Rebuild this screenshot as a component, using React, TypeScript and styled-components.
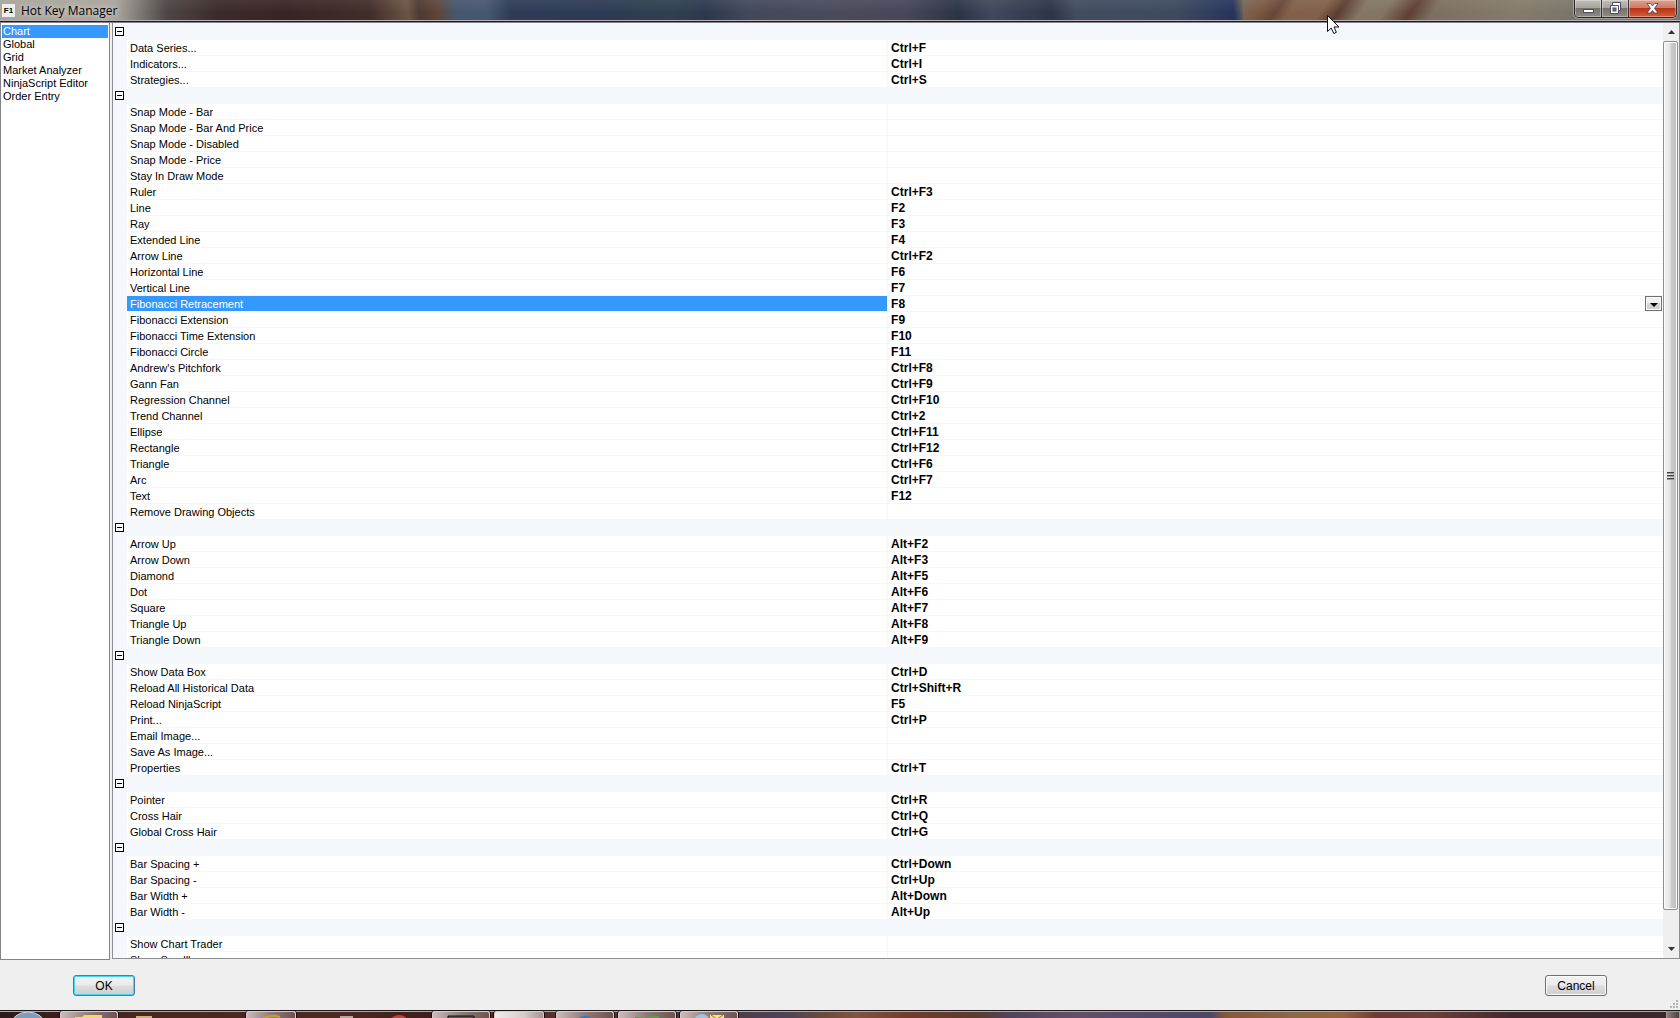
import React, { useState } from "react";
import styled, { createGlobalStyle, css } from "styled-components";

const GlobalStyle = createGlobalStyle`
  *, *::before, *::after { box-sizing: border-box; }
  html, body { margin: 0; height: 100%; overflow: hidden; }
  #root { height: 100%; }
  body, button { font-family: "Liberation Sans", Arial, sans-serif; font-size: 11px; color: #000; }
`;

const Screen = styled.div`
  display: flex;
  flex-direction: column;
  height: 100vh;
  overflow: hidden;
  background: #efefef;
`;

const TitleBar = styled.header`
  display: flex;
  align-items: flex-start;
  flex: none;
  height: 23px;
  padding: 0 3px 0 2px;
  border-bottom: 1px solid #85848c;
  background:
    linear-gradient(#0000 20px, #b4b0b4 20px, #b4b0b4 21px, #201a28 21px),
    linear-gradient(#fff1, #0000 60%),
    linear-gradient(125deg, #77695a 0, #7c5a44 5%, #664636 9%, #80604a 12%, #835f48 19%, #5b3d32 23%, #857664 28%,
      #837462 33%, #5f3e33 39%, #7c6f60 44%, #847b6b 62%, #77736a 78%, #77746e 100%) right / 26% 100% no-repeat,
    linear-gradient(83deg, #aaa59b 0, #a8a39b 7%, #77716c 8.6%, #4c4644 10%, #3b2b2a 13%, #392424 17%,
      #402d29 22%, #6c5444 24.3%, #4d392f 25%, #5f4436 26%, #46566e 27.2%, #47576f 29%, #2f3b56 30.4%,
      #2c3a53 36%, #30404f 40%, #2c384e 42%, #41485a 44.5%, #494b5b 50%, #454657 54%, #2b3446 57%,
      #3f495b 59%, #2b3547 62.6%, #414c5f 64%, #3d495f 70%, #26335a 73.4%, #77695a 74.1%);
`;

const AppIcon = styled.span`
  flex: none;
  width: 13px;
  height: 13px;
  margin-top: 4px;
  background: #eeeeec;
  font: bold 8px/13px "Liberation Sans", sans-serif;
  text-align: center;
`;

const Title = styled.h1`
  flex: 1;
  margin: 0;
  padding-left: 6px;
  font: 12px/22px "Open Sans", "Noto Sans", sans-serif;
  text-shadow: 0 0 6px #fffa, 0 0 10px #fff8;
`;

const CaptionGroup = styled.div`
  display: flex;
  height: 18px;
  border: 1px solid #2a2625;
  border-top: 0;
  border-radius: 0 0 5px 5px;
  box-shadow: 0 0 0 1px #cfcac480;
  overflow: hidden;
`;

const CaptionButton = styled.button<{ $close?: boolean }>`
  display: flex;
  align-items: center;
  justify-content: center;
  width: ${(p) => (p.$close ? 47 : 27)}px;
  height: 17px;
  padding: 0;
  border: 0;
  border-right: ${(p) => (p.$close ? "0" : "1px solid #393431")};
  box-shadow: inset 0 0 0 1px #fff5;
  background: ${(p) =>
    p.$close
      ? "linear-gradient(#e0a292, #cf7a66 45%, #b83317 50%, #d85c38)"
      : "linear-gradient(#c3bfba, #a8a39d 45%, #77726c 50%, #8f8a84)"};
`;

const Body = styled.main`
  display: flex;
  flex: 1;
  min-height: 0;
  gap: 2px;
`;

const Categories = styled.nav`
  flex: none;
  width: 110px;
  padding: 2px 1px;
  border: 1px solid #82848a;
  border-top: 0;
  background: #fff;
`;

const CategoryButton = styled.button<{ $active: boolean }>`
  display: block;
  width: 100%;
  height: 13px;
  padding: 0 0 0 1px;
  border: 0;
  line-height: 13px;
  text-align: left;
  white-space: nowrap;
  background: ${(p) => (p.$active ? "#3399ff" : "#fff")};
  color: ${(p) => (p.$active ? "#fff" : "#000")};
`;

const Panel = styled.section`
  display: flex;
  flex: 1;
  min-width: 0;
  margin-bottom: 1px;
  border: 1px solid #8d8e91;
  border-top: 0;
  background: #fff;
  overflow: hidden;
`;

const TableView = styled.div`
  flex: 1;
  min-width: 0;
  padding-top: 1px;
  background: #f4f7fb;
  overflow: hidden;
`;

const Table = styled.table`
  width: 100%;
  table-layout: fixed;
  border-collapse: separate;
  border-spacing: 0;
`;

const GutterCol = styled.col`
  width: 14px;
`;
const NameCol = styled.col`
  width: 49.1%;
`;

const cell = css`
  height: 16px;
  text-align: left;
  white-space: nowrap;
  border-bottom: 1px solid #f4f6f8;
`;

const Gutter = styled.td`
  padding: 0;
  background: #f4f7fb;
`;

const NameCell = styled.th<{ $selected: boolean }>`
  ${cell}
  padding: 2px 0 0 3px;
  line-height: 13px;
  font-weight: 400;
  border-right: 1px solid #f4f6f8;
  background: ${(p) => (p.$selected ? "#3399ff" : "#fff")};
  color: ${(p) => (p.$selected ? "#fff" : "#000")};
  background-clip: padding-box;
`;

const ValueCell = styled.td`
  ${cell}
  padding: 0 0 0 3px;
  background: #fff;
  font-size: 12px;
  font-weight: 700;
`;

const ValueLine = styled.div`
  display: flex;
  justify-content: space-between;
  height: 15px;
  padding-right: 1px;
  line-height: 17px;
`;

const GroupCell = styled.td`
  height: 16px;
  padding: 0 0 1px 2px;
  background: #f4f7fb;
`;

const Toggle = styled.button`
  display: flex;
  align-items: center;
  justify-content: center;
  width: 9px;
  height: 9px;
  padding: 0;
  border: 1px solid #000;
  background: #fff;

  &::before {
    content: "";
    width: 5px;
    height: 1px;
    background: #000;
  }
`;

const DropButton = styled.button`
  display: flex;
  align-items: center;
  justify-content: center;
  width: 17px;
  height: 15px;
  padding: 3px 0 0;
  border: 1px solid #707070;
  box-shadow: inset 0 0 0 1px #fafafa;
  background: linear-gradient(#f0f0f0 45%, #d6d6d6 50%, #cfcfcf);
`;

const ScrollTrack = styled.div`
  display: flex;
  flex-direction: column;
  flex: none;
  width: 16px;
  background: #efefef;
`;

const ScrollArrow = styled.button`
  display: flex;
  align-items: center;
  justify-content: center;
  height: 18px;
  padding: 0;
  border: 0;
  background: transparent;
`;

const Thumb = styled.div`
  display: flex;
  flex-direction: column;
  align-items: center;
  justify-content: center;
  gap: 1px;
  flex: 29 1 0;
  width: 15px;
  border: 1px solid #8f8f8f;
  border-radius: 2px;
  box-shadow: inset 0 0 0 1px #fafafa;
  background: linear-gradient(90deg, #f4f4f4, #e4e4e4 45%, #cbcbcb 55%, #bfbfbf);
`;

const Grip = styled.i`
  width: 7px;
  height: 2px;
  border-top: 1px solid #444;
  background: #999;
`;

const TrackRest = styled.div`
  flex: 1 1 0;
`;

const Footer = styled.footer`
  display: flex;
  align-items: flex-start;
  justify-content: space-between;
  flex: none;
  position: relative;
  height: 50px;
  padding: 15px 73px 0;
`;

const DialogButton = styled.button<{ $primary?: boolean }>`
  width: 62px;
  height: 21px;
  padding: 0;
  border: 1px solid ${(p) => (p.$primary ? "#3c7fb1" : "#707070")};
  border-radius: 3px;
  box-shadow: inset 0 0 0 1px ${(p) => (p.$primary ? "#46d4f7" : "#fcfcfc")};
  background: linear-gradient(#f2f2f2, #ebebeb 48%, #dddddd 52%, #cfcfcf);
  font-size: 12px;
  line-height: 16px;
`;

const SizeGrip = styled.svg`
  position: absolute;
  right: 2px;
  bottom: 2px;
`;

const Pointer = styled.svg`
  position: absolute;
  left: 79%;
  top: 15px;
  pointer-events: none;
`;

const TaskBar = styled.div`
  display: flex;
  flex: none;
  height: 8px;
  border-top: 1px solid #1c1416;
  box-shadow: inset 0 1px #b3a8a4;
  background: linear-gradient(90deg, #2c1a18 0, #4a261f 8%, #4d2820 20%, #3c1d19 26%, #5a2c22 30%, #4c3d44 43%,
    #4e4456 47%, #6b4a3c 49%, #80553e 51%, #6f3d2e 54%, #5b3b2c 58%, #50445a 60%, #625068 64%, #4c4765 72%,
    #85583c 73%, #8c6844 77%, #94663f 80%, #6b3a34 82%, #6d4038 85%, #40292d 90%, #3a272b 100%);
`;

const Slot = styled.span<{ $w: number; $look?: "lit" | "bright" }>`
  display: flex;
  justify-content: center;
  flex: none;
  width: ${(p) => p.$w}px;
  height: 7px;
  ${(p) =>
    p.$look &&
    css`
      border: 1px solid #d8ccc8;
      border-bottom: 0;
      border-radius: 3px 3px 0 0;
      box-shadow: 1px 0 #1a0f0f, -1px 0 #1a0f0f;
      background: ${p.$look === "bright"
        ? "linear-gradient(90deg, #f1edec, #d6cdcb 60%, #a59592)"
        : "linear-gradient(100deg, #c9bebb, #8e7a76 50%, #6d5350)"};
    `}
`;

const ShowDesktop = styled.span`
  width: 14px;
  height: 7px;
  margin-left: auto;
  border: 1px solid #a39894;
  border-bottom: 0;
  background: linear-gradient(90deg, #8a7f7c, #4d4040);
`;

const groups: [string, string][][] = [
  [["Data Series...", "Ctrl+F"], ["Indicators...", "Ctrl+I"], ["Strategies...", "Ctrl+S"]],
  [
    ["Snap Mode - Bar", ""], ["Snap Mode - Bar And Price", ""], ["Snap Mode - Disabled", ""],
    ["Snap Mode - Price", ""], ["Stay In Draw Mode", ""], ["Ruler", "Ctrl+F3"], ["Line", "F2"],
    ["Ray", "F3"], ["Extended Line", "F4"], ["Arrow Line", "Ctrl+F2"], ["Horizontal Line", "F6"],
    ["Vertical Line", "F7"], ["Fibonacci Retracement", "F8"], ["Fibonacci Extension", "F9"],
    ["Fibonacci Time Extension", "F10"], ["Fibonacci Circle", "F11"], ["Andrew's Pitchfork", "Ctrl+F8"],
    ["Gann Fan", "Ctrl+F9"], ["Regression Channel", "Ctrl+F10"], ["Trend Channel", "Ctrl+2"],
    ["Ellipse", "Ctrl+F11"], ["Rectangle", "Ctrl+F12"], ["Triangle", "Ctrl+F6"], ["Arc", "Ctrl+F7"],
    ["Text", "F12"], ["Remove Drawing Objects", ""],
  ],
  [
    ["Arrow Up", "Alt+F2"], ["Arrow Down", "Alt+F3"], ["Diamond", "Alt+F5"], ["Dot", "Alt+F6"],
    ["Square", "Alt+F7"], ["Triangle Up", "Alt+F8"], ["Triangle Down", "Alt+F9"],
  ],
  [
    ["Show Data Box", "Ctrl+D"], ["Reload All Historical Data", "Ctrl+Shift+R"],
    ["Reload NinjaScript", "F5"], ["Print...", "Ctrl+P"], ["Email Image...", ""],
    ["Save As Image...", ""], ["Properties", "Ctrl+T"],
  ],
  [["Pointer", "Ctrl+R"], ["Cross Hair", "Ctrl+Q"], ["Global Cross Hair", "Ctrl+G"]],
  [
    ["Bar Spacing +", "Ctrl+Down"], ["Bar Spacing -", "Ctrl+Up"], ["Bar Width +", "Alt+Down"],
    ["Bar Width -", "Alt+Up"],
  ],
  [["Show Chart Trader", ""], ["Show Scrollbar", ""]],
];

const categories = ["Chart", "Global", "Grid", "Market Analyzer", "NinjaScript Editor", "Order Entry"];

export default function App() {
  const [category, setCategory] = useState("Chart");
  const [selected, setSelected] = useState("Fibonacci Retracement");
  const [closed, setClosed] = useState<number[]>([]);
  const toggle = (i: number) =>
    setClosed((c) => (c.includes(i) ? c.filter((n) => n !== i) : [...c, i]));

  return (
    <Screen>
      <GlobalStyle />
      <TitleBar>
        <AppIcon>F1</AppIcon>
        <Title>Hot Key Manager</Title>
        <CaptionGroup>
          <CaptionButton aria-label="Minimize">
            <svg width="12" height="11"><rect x="1.5" y="6.5" width="10" height="3" fill="#fff" stroke="#4b4f5c" /></svg>
          </CaptionButton>
          <CaptionButton aria-label="Restore">
            <svg width="13" height="13">
              <path d="M3.5 .5h8v8h-2v3h-8v-8h2z" fill="#fff" stroke="#4b4f5c" />
              <path d="M9.500 8.500v-5h-6" fill="none" stroke="#4b4f5c" />
              <rect x="4" y="6" width="3" height="3" fill="#777" stroke="#4b4f5c" />
            </svg>
          </CaptionButton>
          <CaptionButton $close aria-label="Close">
            <svg width="13" height="11">
              <path d="M1 .5h3.500l2 2.500 2-2.500H12L8.500 5.300 12 10H8.500l-2-2.500-2 2.500H1l3.500-4.700z" fill="#fff" stroke="#4b3f4c" strokeWidth=".8" />
            </svg>
          </CaptionButton>
        </CaptionGroup>
      </TitleBar>

      <Body>
        <Categories aria-label="Hot key categories">
          {categories.map((c) => (
            <CategoryButton key={c} $active={c === category} onClick={() => setCategory(c)}>
              {c}
            </CategoryButton>
          ))}
        </Categories>

        <Panel>
          <TableView>
            <Table>
              <colgroup>
                <GutterCol />
                <NameCol />
                <col />
              </colgroup>
              {groups.map((rows, i) => (
                <tbody key={i}>
                  <tr>
                    <GroupCell colSpan={3}>
                      <Toggle aria-label="Toggle group" aria-expanded={!closed.includes(i)} onClick={() => toggle(i)} />
                    </GroupCell>
                  </tr>
                  {!closed.includes(i) &&
                    rows.map(([name, keys]) => (
                      <tr key={name} onClick={() => setSelected(name)}>
                        <Gutter />
                        <NameCell scope="row" $selected={name === selected}>{name}</NameCell>
                        <ValueCell>
                          <ValueLine>
                            {keys}
                            {name === selected && (
                              <DropButton aria-label="Choose hot key">
                                <svg width="8" height="4"><path d="M0 0h8L4 4z" /></svg>
                              </DropButton>
                            )}
                          </ValueLine>
                        </ValueCell>
                      </tr>
                    ))}
                </tbody>
              ))}
            </Table>
          </TableView>
          <ScrollTrack>
            <ScrollArrow aria-label="Scroll up">
              <svg width="7" height="4"><path d="M0 4l3.500-4L7 4z" fill="#333" /></svg>
            </ScrollArrow>
            <Thumb><Grip /><Grip /><Grip /></Thumb>
            <TrackRest />
            <ScrollArrow aria-label="Scroll down">
              <svg width="7" height="4"><path d="M0 0h7L3.500 4z" fill="#333" /></svg>
            </ScrollArrow>
          </ScrollTrack>
        </Panel>
      </Body>

      <Footer>
        <DialogButton $primary>OK</DialogButton>
        <DialogButton>Cancel</DialogButton>
        <SizeGrip width="8" height="8" fill="#b5b5b5">
          <path d="M6 0h2v2H6zM3 3h2v2H3zM6 3h2v2H6zM0 6h2v2H0zM3 6h2v2H3zM6 6h2v2H6z" />
        </SizeGrip>
      </Footer>

      <TaskBar>
        <Slot $w={60}>
          <svg width="34" height="7"><ellipse cx="15" cy="14" rx="17" ry="13" fill="#7d9dbd" stroke="#c7d3de" /></svg>
        </Slot>
        <Slot $w={58} $look="lit">
          <svg width="28" height="7"><path d="M0 5h7l2-2h18v4H0z" fill="#f5d667" /></svg>
        </Slot>
        <Slot $w={52}>
          <svg width="16" height="7"><path d="M0 5h16v2H0z" fill="#cdb275" /></svg>
        </Slot>
        <Slot $w={76} />
        <Slot $w={50} $look="lit">
          <svg width="22" height="7"><path d="M2 7q8-5 18-2" fill="none" stroke="#c99b34" strokeWidth="2" /></svg>
        </Slot>
        <Slot $w={8} />
        <Slot $w={84}>
          <svg width="13" height="7"><path d="M0 5h13v2H0z" fill="#b5a6a2" /></svg>
        </Slot>
        <Slot $w={22}>
          <svg width="18" height="7"><ellipse cx="9" cy="11" rx="9" ry="7" fill="#cf3b33" /></svg>
        </Slot>
        <Slot $w={22} />
        <Slot $w={58} $look="lit">
          <svg width="28" height="7"><path d="M1 4h26v3H1z" fill="#555" stroke="#111" /></svg>
        </Slot>
        <Slot $w={4} />
        <Slot $w={50} $look="bright" />
        <Slot $w={12} />
        <Slot $w={58} $look="lit">
          <svg width="16" height="7"><ellipse cx="8" cy="10" rx="8" ry="6" fill="#1d7fd0" /></svg>
        </Slot>
        <Slot $w={4} />
        <Slot $w={58} $look="lit">
          <svg width="24" height="7"><path d="M0 6h8M12 5h12" stroke="#5f9a4b" strokeWidth="2" /></svg>
        </Slot>
        <Slot $w={4} />
        <Slot $w={58} $look="lit">
          <svg width="30" height="7">
            <ellipse cx="8" cy="8" rx="7" ry="6" fill="#9cc4e4" />
            <path d="M16 3h14v4H16z" fill="#fbe27a" />
            <path d="M17 3l6 4 6-4" fill="none" stroke="#a77a16" />
          </svg>
        </Slot>
        <ShowDesktop />
      </TaskBar>

      <Pointer width="13" height="20">
        <path d="M.5 .5v16l3.700-3.500 2.600 5.500 2.600-1.200L7 12h5z" fill="#fff" stroke="#111" />
      </Pointer>
    </Screen>
  );
}
